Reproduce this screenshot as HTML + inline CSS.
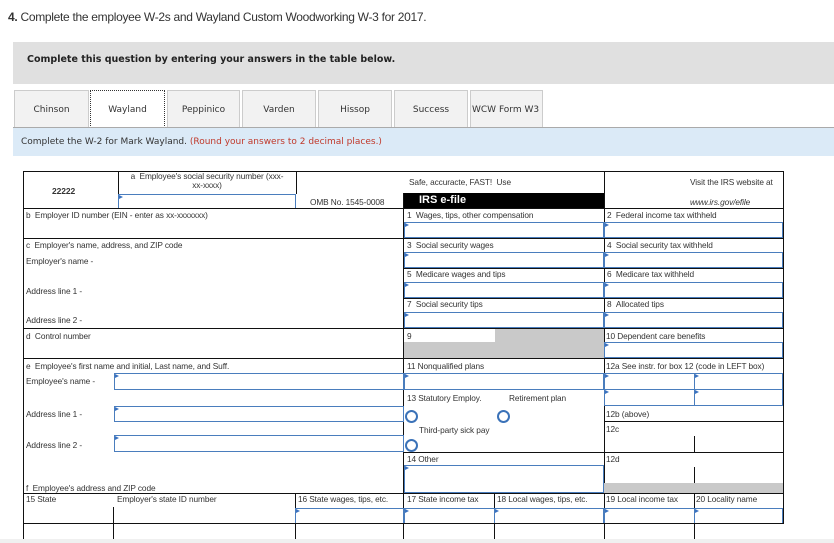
<!DOCTYPE html>
<html><head><meta charset="utf-8"><style>
*{margin:0;padding:0;box-sizing:border-box}
body{width:834px;height:543px;background:#fff;position:relative;overflow:hidden;font-family:"Liberation Sans",sans-serif;color:#333}
.a{position:absolute}
.h{position:absolute;height:1px;background:#111}
.v{position:absolute;width:1px;background:#111}
.t{position:absolute;font-size:8.3px;color:#333;white-space:nowrap;line-height:10px;letter-spacing:-0.1px}
.in{position:absolute;border:1.5px solid #4a7dbd;background:#fff}
.in:before{content:"";position:absolute;left:0;top:0;border-left:4px solid #3a72c0;border-top:2px solid transparent;border-bottom:2px solid transparent}
.c{position:absolute;width:13px;height:13px;border:2px solid #3b72b8;border-radius:50%}
.g{position:absolute;background:#c9c9c9}
.tab{position:absolute;top:90px;height:38px;background:#f2f2f2;border:1px solid #ccc;border-bottom:none;font-family:"DejaVu Sans",sans-serif;font-size:9px;color:#333;text-align:center;line-height:38px}
</style></head><body>
<div class="a" style="left:8px;top:10px;font-size:12px;color:#333;letter-spacing:-0.3px"><b>4.</b> Complete the employee W-2s and Wayland Custom Woodworking W-3 for 2017.</div>
<div class="a" style="left:13px;top:42px;width:821px;height:42px;background:#e0e0e0"></div>
<div class="a" style="left:27px;top:54px;font-family:'DejaVu Sans',sans-serif;font-size:9.5px;font-weight:bold;color:#222">Complete this question by entering your answers in the table below.</div>
<div class="tab" style="left:14px;width:75px">Chinson</div>
<div class="tab" style="left:90px;width:75px;background:#fff;border:1px dotted #333;border-bottom:none">Wayland</div>
<div class="tab" style="left:167px;width:73px">Peppinico</div>
<div class="tab" style="left:242px;width:74px">Varden</div>
<div class="tab" style="left:318px;width:74px">Hissop</div>
<div class="tab" style="left:394px;width:74px">Success</div>
<div class="tab" style="left:470px;width:73px;text-align:left;padding-left:1px">WCW Form W3</div>
<div class="a" style="left:13px;top:127px;width:821px;height:1px;background:#aaa"></div>
<div class="a" style="left:13px;top:128px;width:821px;height:28px;background:#dbeaf7"></div>
<div class="a" style="left:21px;top:137px;font-family:'DejaVu Sans',sans-serif;font-size:9px;color:#333">Complete the W-2 for Mark Wayland. <span style="color:#c0392b">(Round your answers to 2 decimal places.)</span></div>

<div class="h" style="left:23px;top:171px;width:761px"></div>
<div class="v" style="left:23px;top:171px;height:372px"></div>
<div class="v" style="left:783px;top:171px;height:352px"></div>
<div class="v" style="left:118px;top:171px;height:37px"></div>
<div class="v" style="left:296px;top:171px;height:23px"></div>
<div class="v" style="left:604px;top:171px;height:37px"></div>
<div class="t" style="left:52px;top:186px;font-weight:bold;font-size:8.5px">22222</div>
<div class="t" style="left:126px;top:172px;width:162px;text-align:center;white-space:normal;line-height:9px">a &nbsp;Employee's social security number (xxx-xx-xxxx)</div>
<div class="in" style="left:118px;top:194px;width:178px;height:15px"></div>
<div class="t" style="left:310px;top:197px">OMB No. 1545-0008</div>
<div class="t" style="left:409px;top:177px">Safe, accuracte, FAST! &nbsp;Use</div>
<div class="a" style="left:404px;top:193px;width:200px;height:15px;background:#000;color:#fff;font-weight:bold;font-size:11px;padding-left:15px;line-height:15px">IRS e-file</div>
<div class="t" style="left:690px;top:177px">Visit the IRS website at</div>
<div class="t" style="left:690px;top:197px;font-style:italic">www.irs.gov/efile</div>
<div class="h" style="left:23px;top:208px;width:761px"></div>
<div class="v" style="left:403px;top:193px;height:350px"></div>
<div class="v" style="left:604px;top:208px;height:335px"></div>
<div class="t" style="left:26px;top:210px">b &nbsp;Employer ID number (EIN - enter as xx-xxxxxxx)</div>
<div class="t" style="left:407px;top:210px">1 &nbsp;Wages, tips, other compensation</div>
<div class="t" style="left:607px;top:210px">2 &nbsp;Federal income tax withheld</div>
<div class="in" style="left:404px;top:222px;width:200px;height:16px"></div>
<div class="in" style="left:604px;top:222px;width:179px;height:16px"></div>
<div class="h" style="left:23px;top:238px;width:761px"></div>
<div class="t" style="left:26px;top:240px">c &nbsp;Employer's name, address, and ZIP code</div>
<div class="t" style="left:26px;top:256px">Employer's name -</div>
<div class="t" style="left:26px;top:286px">Address line 1 -</div>
<div class="t" style="left:26px;top:315px">Address line 2 -</div>
<div class="t" style="left:407px;top:240px">3 &nbsp;Social security wages</div>
<div class="t" style="left:607px;top:240px">4 &nbsp;Social security tax withheld</div>
<div class="in" style="left:404px;top:252px;width:200px;height:16px"></div>
<div class="in" style="left:604px;top:252px;width:179px;height:16px"></div>
<div class="h" style="left:403px;top:268px;width:381px"></div>
<div class="t" style="left:407px;top:269px">5 &nbsp;Medicare wages and tips</div>
<div class="t" style="left:607px;top:269px">6 &nbsp;Medicare tax withheld</div>
<div class="in" style="left:404px;top:282px;width:200px;height:16px"></div>
<div class="in" style="left:604px;top:282px;width:179px;height:16px"></div>
<div class="h" style="left:403px;top:298px;width:381px"></div>
<div class="t" style="left:407px;top:299px">7 &nbsp;Social security tips</div>
<div class="t" style="left:607px;top:299px">8 &nbsp;Allocated tips</div>
<div class="in" style="left:404px;top:312px;width:200px;height:16px"></div>
<div class="in" style="left:604px;top:312px;width:179px;height:16px"></div>
<div class="h" style="left:23px;top:328px;width:761px"></div>
<div class="t" style="left:26px;top:331px">d &nbsp;Control number</div>
<div class="t" style="left:407px;top:331px">9</div>
<div class="g" style="left:495px;top:329px;width:109px;height:13px"></div>
<div class="g" style="left:404px;top:342px;width:200px;height:16px"></div>
<div class="t" style="left:606px;top:331px">10 Dependent care benefits</div>
<div class="in" style="left:604px;top:342px;width:179px;height:16px"></div>
<div class="h" style="left:23px;top:358px;width:761px"></div>
<div class="t" style="left:26px;top:361px">e &nbsp;Employee's first name and initial, Last name, and Suff.</div>
<div class="t" style="left:26px;top:376px">Employee's name -</div>
<div class="in" style="left:114px;top:373px;width:290px;height:17px"></div>
<div class="t" style="left:26px;top:409px">Address line 1 -</div>
<div class="in" style="left:114px;top:406px;width:290px;height:16px"></div>
<div class="t" style="left:26px;top:440px">Address line 2 -</div>
<div class="in" style="left:114px;top:435px;width:290px;height:17px"></div>
<div class="t" style="left:26px;top:483px">f &nbsp;Employee's address and ZIP code</div>
<div class="t" style="left:407px;top:361px">11 Nonqualified plans</div>
<div class="in" style="left:404px;top:373px;width:200px;height:17px"></div>
<div class="t" style="left:606px;top:361px">12a See instr. for box 12 (code in LEFT box)</div>
<div class="in" style="left:604px;top:373px;width:91px;height:17px"></div>
<div class="in" style="left:694px;top:373px;width:89px;height:17px"></div>
<div class="in" style="left:604px;top:389px;width:91px;height:17px"></div>
<div class="in" style="left:694px;top:389px;width:89px;height:17px"></div>
<div class="t" style="left:407px;top:393px">13 Statutory Employ.</div>
<div class="t" style="left:509px;top:393px">Retirement plan</div>
<div class="c" style="left:405px;top:410px"></div>
<div class="c" style="left:497px;top:410px"></div>
<div class="t" style="left:419px;top:425px">Third-party sick pay</div>
<div class="c" style="left:405px;top:439px"></div>
<div class="t" style="left:606px;top:409px">12b (above)</div>
<div class="h" style="left:604px;top:421px;width:180px"></div>
<div class="t" style="left:606px;top:424px">12c</div>
<div class="v" style="left:694px;top:436px;height:16px"></div>
<div class="h" style="left:403px;top:452px;width:381px"></div>
<div class="t" style="left:407px;top:454px">14 Other</div>
<div class="in" style="left:404px;top:465px;width:200px;height:28px"></div>
<div class="t" style="left:606px;top:454px">12d</div>
<div class="v" style="left:694px;top:467px;height:16px"></div>
<div class="g" style="left:604px;top:483px;width:179px;height:10px"></div>
<div class="h" style="left:23px;top:493px;width:761px"></div>
<div class="t" style="left:26px;top:494px">15 State</div>
<div class="t" style="left:117px;top:494px">Employer's state ID number</div>
<div class="t" style="left:298px;top:494px">16 State wages, tips, etc.</div>
<div class="t" style="left:407px;top:494px">17 State income tax</div>
<div class="t" style="left:497px;top:494px">18 Local wages, tips, etc.</div>
<div class="t" style="left:606px;top:494px">19 Local income tax</div>
<div class="t" style="left:696px;top:494px">20 Locality name</div>
<div class="v" style="left:113px;top:507px;height:36px"></div>
<div class="v" style="left:295px;top:493px;height:50px"></div>
<div class="v" style="left:494px;top:493px;height:50px"></div>
<div class="v" style="left:694px;top:493px;height:50px"></div>
<div class="in" style="left:295px;top:508px;width:109px;height:16px"></div>
<div class="in" style="left:404px;top:508px;width:91px;height:16px"></div>
<div class="in" style="left:494px;top:508px;width:110px;height:16px"></div>
<div class="in" style="left:604px;top:508px;width:91px;height:16px"></div>
<div class="in" style="left:694px;top:508px;width:89px;height:16px"></div>
<div class="h" style="left:23px;top:523px;width:761px"></div>
<div class="a" style="left:0;top:539px;width:834px;height:4px;background:#f0f0f0"></div>
</body></html>
